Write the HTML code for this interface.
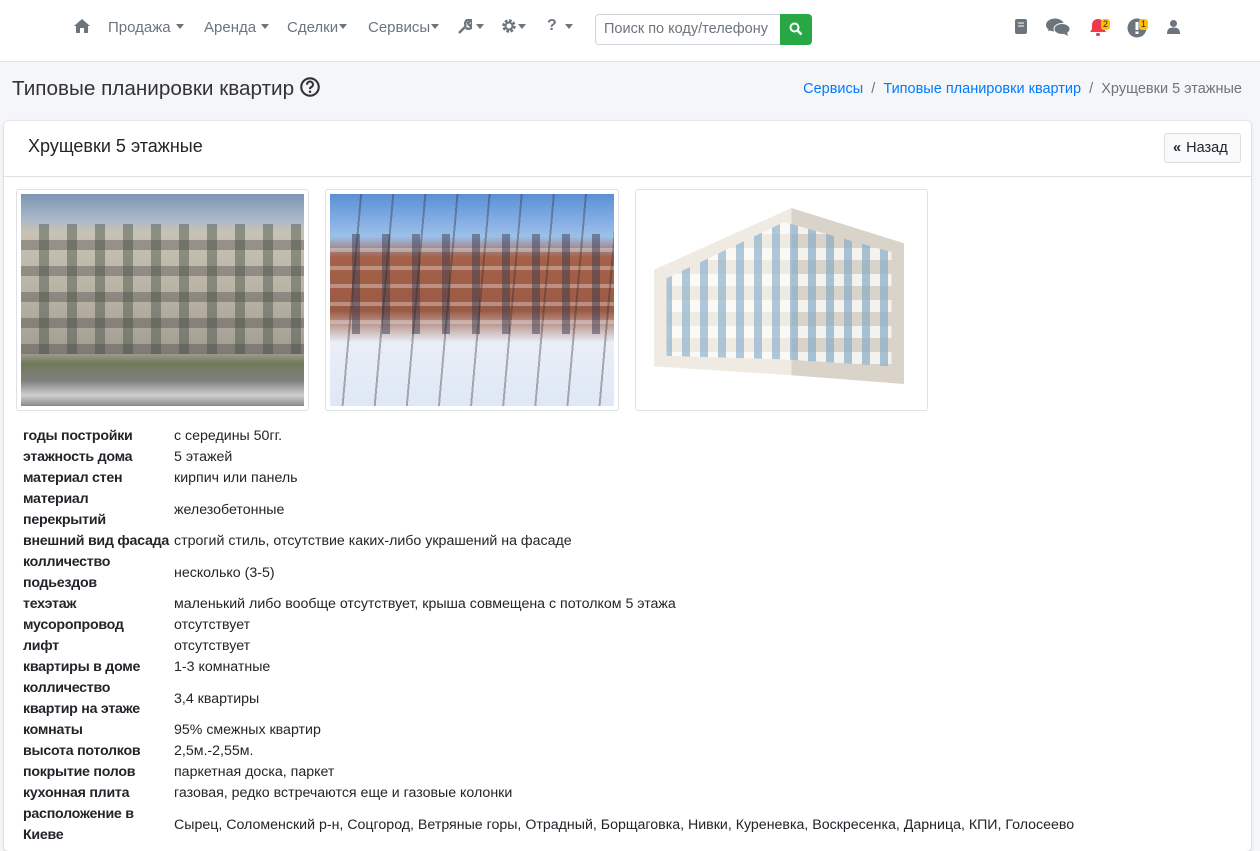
<!DOCTYPE html>
<html><head><meta charset="utf-8"><style>
*{box-sizing:border-box;margin:0;padding:0}
body{width:1260px;height:837px;overflow:hidden;background:#f4f6f9;font-family:"Liberation Sans",Arial,sans-serif;color:#212529;font-size:14px;position:relative}
.nav{position:absolute;left:0;top:0;width:1260px;height:62px;background:#fff;border-bottom:1px solid #dee2e6}
.ni{position:absolute;top:19px;font-size:15px;color:#6c757d}
.car{display:inline-block;border-top:5px solid #6c757d;border-left:4px solid transparent;border-right:4px solid transparent;vertical-align:3px;margin-left:5px}
.search{position:absolute;left:595px;top:14px;width:186px;height:31px;border:1px solid #ced4da;border-radius:4px 0 0 4px;font-size:14.5px;color:#6c757d;padding:6px 8px;white-space:nowrap;overflow:hidden}
.sbtn{position:absolute;left:780px;top:14px;width:32px;height:31px;background:#28a745;border-radius:0 4px 4px 0}
.badge{position:absolute;background:#ffc107;color:#212529;font-size:9px;border-radius:3px;padding:0 2px;line-height:11px}
h1{position:absolute;left:12px;top:77px;font-size:20.7px;font-weight:400;color:#333}
.bc{position:absolute;right:18px;top:81px;font-size:14.5px;color:#6c757d}
.bc a{color:#007bff;text-decoration:none}
.card{position:absolute;left:4px;top:121px;width:1247px;height:730px;background:#fff;border-radius:4px;box-shadow:0 0 1px rgba(0,0,0,.2),0 1px 3px rgba(0,0,0,.15)}
.ch{height:56px;border-bottom:1px solid #dee2e6;position:relative}
.ch h3{position:absolute;left:24px;top:15px;font-size:18px;font-weight:400}
.back{position:absolute;right:10px;top:12px;width:77px;height:30px;border:1px solid #ddd;background:#f8f9fa;border-radius:3px;font-size:14.5px;padding:6px 8px;white-space:nowrap}
.th{position:absolute;top:68px;height:222px;border:1px solid #dee2e6;border-radius:3px;padding:4px;background:#fff}
.th div{width:100%;height:100%}
table{position:absolute;left:19px;top:305px;border-collapse:collapse;font-size:14.2px;line-height:21px}
td{padding:0;vertical-align:middle;white-space:nowrap;line-height:21px}
td:first-child{font-weight:bold;width:151px;min-width:151px;max-width:151px;white-space:normal;letter-spacing:-0.25px}
</style></head><body>
<div class="nav">
<svg style="position:absolute;left:74px;top:19px" width="16" height="14" viewBox="0 0 16 14"><path d="M8 0L0 7h2v7h4V9h4v5h4V7h2z" fill="#6c757d"/></svg>
<span class="ni" style="left:108px">Продажа<i class="car"></i></span>
<span class="ni" style="left:204px">Аренда<i class="car"></i></span>
<span class="ni" style="left:287px">Сделки<i class="car" style="margin-left:1px"></i></span>
<span class="ni" style="left:368px">Сервисы<i class="car" style="margin-left:1px"></i></span>
<svg style="position:absolute;left:458px;top:19px" width="14" height="15" viewBox="0 0 14 15"><path d="M1 14l7-7M8 7a4 4 0 0 1 5-6l-3 3 1 2 2 1 1-3a4 4 0 0 1-6 5" stroke="#6c757d" stroke-width="2.4" fill="none"/></svg><i class="car" style="position:absolute;left:476px;top:24px;margin:0"></i>
<svg style="position:absolute;left:502px;top:19px" width="14" height="14" viewBox="0 0 14 14"><circle cx="7" cy="7" r="5" fill="none" stroke="#6c757d" stroke-width="3.5" stroke-dasharray="2.5 1.4"/><circle cx="7" cy="7" r="3.5" fill="none" stroke="#6c757d" stroke-width="2"/></svg><i class="car" style="position:absolute;left:518px;top:24px;margin:0"></i>
<span class="ni" style="left:547px;font-weight:bold;font-size:16px;top:17px">?</span><i class="car" style="position:absolute;left:565px;top:24px;margin:0"></i>
<div class="search">Поиск по коду/телефону</div>
<div class="sbtn"><svg style="position:absolute;left:9px;top:8px" width="14" height="14" viewBox="0 0 14 14"><circle cx="5.5" cy="5.5" r="4" stroke="#fff" stroke-width="2" fill="none"/><path d="M8.5 8.5L12.5 12.5" stroke="#fff" stroke-width="2.5"/></svg></div>
<svg style="position:absolute;left:1015px;top:19px" width="12" height="15" viewBox="0 0 12 15"><rect x="0" y="0" width="12" height="15" rx="2" fill="#6c757d"/><path d="M3 4h6M3 7h6" stroke="#fff"/></svg>
<svg style="position:absolute;left:1046px;top:18px" width="25" height="19" viewBox="0 0 25 19"><ellipse cx="9" cy="7" rx="9" ry="6.5" fill="#6c757d"/><path d="M2 13l1-3 3 2z" fill="#6c757d"/><ellipse cx="16" cy="11" rx="8" ry="5.5" fill="#6c757d" stroke="#fff" stroke-width="1"/><path d="M22 18l-1-4-3 2z" fill="#6c757d"/></svg>
<svg style="position:absolute;left:1089px;top:18px" width="18" height="19" viewBox="0 0 18 19"><path d="M9 1c-4 0-6 3-6 6v4l-2 3h16l-2-3V7c0-3-2-6-6-6z" fill="#ef3a4a"/><rect x="7" y="15" width="4" height="3" rx="1.5" fill="#ef3a4a"/></svg>
<span class="badge" style="left:1101px;top:19px">2</span>
<svg style="position:absolute;left:1127px;top:18px" width="20" height="20" viewBox="0 0 20 20"><circle cx="10" cy="10" r="9.5" fill="#6c757d"/><rect x="8.5" y="4" width="3" height="8" fill="#fff"/><rect x="8.5" y="13.5" width="3" height="2.5" fill="#fff"/></svg>
<span class="badge" style="left:1139px;top:19px">1</span>
<svg style="position:absolute;left:1167px;top:20px" width="13" height="14" viewBox="0 0 13 14"><circle cx="6.5" cy="3.5" r="3.5" fill="#6c757d"/><path d="M0 14c0-5 2-6.5 6.5-6.5S13 9 13 14z" fill="#6c757d"/></svg>
</div>
<h1>Типовые планировки квартир <svg style="vertical-align:-2px" width="20" height="20" viewBox="0 0 19 19"><circle cx="9.5" cy="9.5" r="8.3" fill="none" stroke="#333" stroke-width="2"/><path d="M6.7 7.3a2.8 2.8 0 1 1 3.8 2.4c-.8.4-1 .9-1 1.8" fill="none" stroke="#333" stroke-width="2"/><circle cx="9.5" cy="14" r="1.2" fill="#333"/></svg></h1>
<div class="bc"><a>Сервисы</a> &nbsp;/&nbsp; <a>Типовые планировки квартир</a> &nbsp;/&nbsp; Хрущевки 5 этажные</div>
<div class="card">
<div class="ch"><h3>Хрущевки 5 этажные</h3><div class="back"><b style="letter-spacing:-3px">«</b>&nbsp; Назад</div></div>
<div class="th" style="left:12px;width:293px"><div style="background:linear-gradient(180deg,#7d96b4 0%,#aab8c8 12%,#c8c2b4 18%,#b7b1a3 50%,#a29d92 75%,#6f7a5a 80%,#7f7f7f 88%,#cfcfcf 95%,#888 100%);position:relative"><div style="position:absolute;left:0;right:0;top:30px;height:130px;background:repeating-linear-gradient(90deg,transparent 0 18px,rgba(70,80,70,.45) 18px 28px),repeating-linear-gradient(180deg,transparent 0 16px,rgba(60,60,60,.35) 16px 26px)"></div></div></div>
<div class="th" style="left:321px;width:294px"><div style="background:linear-gradient(180deg,#5b8fd6 0%,#9cc0ea 20%,#a66148 30%,#9a5a45 55%,#e9eef7 70%,#dfe8f6 100%);position:relative"><div style="position:absolute;left:0;right:0;top:40px;height:100px;background:repeating-linear-gradient(90deg,transparent 0 22px,rgba(60,60,80,.5) 22px 30px),repeating-linear-gradient(180deg,transparent 0 14px,rgba(240,240,240,.35) 14px 18px)"></div><div style="position:absolute;inset:0;background:repeating-linear-gradient(95deg,transparent 0 30px,rgba(40,40,40,.35) 30px 32px)"></div></div></div>
<div class="th" style="left:631px;width:293px"><div style="position:relative;background:#fff"><div style="position:absolute;left:14px;top:14px;width:250px;height:176px;background:linear-gradient(90deg,#f0ebe2 0 55%,#d9d3c9 55% 100%);clip-path:polygon(0 35%,55% 0,100% 20%,100% 100%,55% 95%,0 90%)"></div><div style="position:absolute;left:14px;top:14px;width:250px;height:176px;background:repeating-linear-gradient(90deg,transparent 0 10px,rgba(110,160,200,.75) 10px 18px),repeating-linear-gradient(180deg,transparent 0 14px,#fff 14px 26px);clip-path:polygon(5% 40%,52% 8%,95% 25%,95% 90%,52% 86%,5% 84%);opacity:.7"></div></div></div>
<table>
<tr><td>годы постройки</td><td>с середины 50гг.</td></tr>
<tr><td>этажность дома</td><td>5 этажей</td></tr>
<tr><td>материал стен</td><td>кирпич или панель</td></tr>
<tr><td>материал перекрытий</td><td>железобетонные</td></tr>
<tr><td style="white-space:nowrap">внешний вид фасада</td><td>строгий стиль, отсутствие каких-либо украшений на фасаде</td></tr>
<tr><td>колличество подьездов</td><td>несколько (3-5)</td></tr>
<tr><td>техэтаж</td><td>маленький либо вообще отсутствует, крыша совмещена с потолком 5 этажа</td></tr>
<tr><td>мусоропровод</td><td>отсутствует</td></tr>
<tr><td>лифт</td><td>отсутствует</td></tr>
<tr><td>квартиры в доме</td><td>1-3 комнатные</td></tr>
<tr><td>колличество<br>квартир на этаже</td><td>3,4 квартиры</td></tr>
<tr><td>комнаты</td><td>95% смежных квартир</td></tr>
<tr><td>высота потолков</td><td>2,5м.-2,55м.</td></tr>
<tr><td>покрытие полов</td><td>паркетная доска, паркет</td></tr>
<tr><td>кухонная плита</td><td>газовая, редко встречаются еще и газовые колонки</td></tr>
<tr><td>расположение в Киеве</td><td>Сырец, Соломенский р-н, Соцгород, Ветряные горы, Отрадный, Борщаговка, Нивки, Куреневка, Воскресенка, Дарница, КПИ, Голосеево</td></tr>
</table>
</div>
</body></html>
